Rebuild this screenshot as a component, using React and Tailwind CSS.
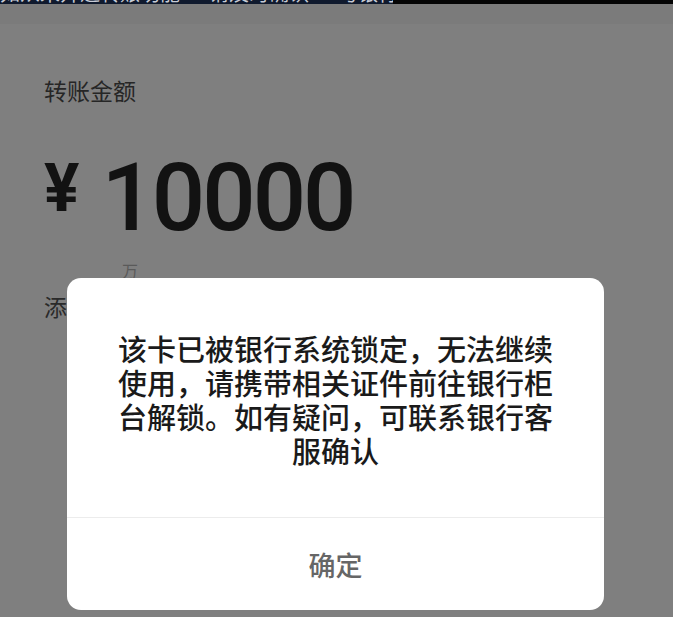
export default function App() {
  return (
    <div
      className="relative h-[617px] w-[673px] overflow-hidden bg-[#7f7f7f]"
      style={{ fontFamily: '"Noto Sans CJK SC", "Noto Sans", sans-serif' }}
    >
      {/* clipped status strip */}
      <div className="flex h-[4px] overflow-hidden">
        <div className="w-[393px] overflow-hidden bg-[#101a2e]">
          <p className="-mt-[17px] whitespace-nowrap text-[20px] leading-[20px] text-[#c8ccd6]">
            如从未开通转账功能 · 请及时确认 · 与银行联系
          </p>
        </div>
        <div className="flex-1 bg-[#050505]" />
      </div>
      <div className="h-[20px] bg-[#7b7b7b]" />

      {/* page behind the dialog */}
      <div className="pl-[44px]">
        <p className="mt-[55px] text-[23px] leading-none text-[#262626]">转账金额</p>

        <div className="mt-[48px] flex items-start">
          <span
            className="mt-[6px] text-[66px] font-bold leading-none text-[#121212]"
            style={{ fontFamily: 'Roboto, sans-serif' }}
          >
            ¥
          </span>
          <span
            className="ml-[22px] text-[94px] font-medium leading-[96px] tracking-[-3px] text-[#121212]"
            style={{ fontFamily: 'Roboto, sans-serif' }}
          >
            10000
          </span>
        </div>

        <p className="ml-[78px] mt-[16px] text-[16px] leading-none text-[#5a5a5a]">万</p>
        <p className="mt-[17px] text-[23px] leading-none text-[#2a2a2a]">添加转账说明</p>
      </div>

      {/* dialog */}
      <div className="absolute left-[67px] top-[278px] flex h-[332px] w-[537px] flex-col rounded-[14px] bg-white">
        <p className="px-[48px] pt-[53px] text-center text-[29px] font-medium leading-[34px] text-[#1a1a1a]">
          该卡已被银行系统锁定，无法继续使用，请携带相关证件前往银行柜台解锁。如有疑问，可联系银行客服确认
        </p>
        <div className="mt-[50px] h-px bg-[#ececec]" />
        <div className="flex flex-1 items-center justify-center">
          <span className="text-[27px] font-medium leading-none text-[#666666]">确定</span>
        </div>
      </div>
    </div>
  );
}
